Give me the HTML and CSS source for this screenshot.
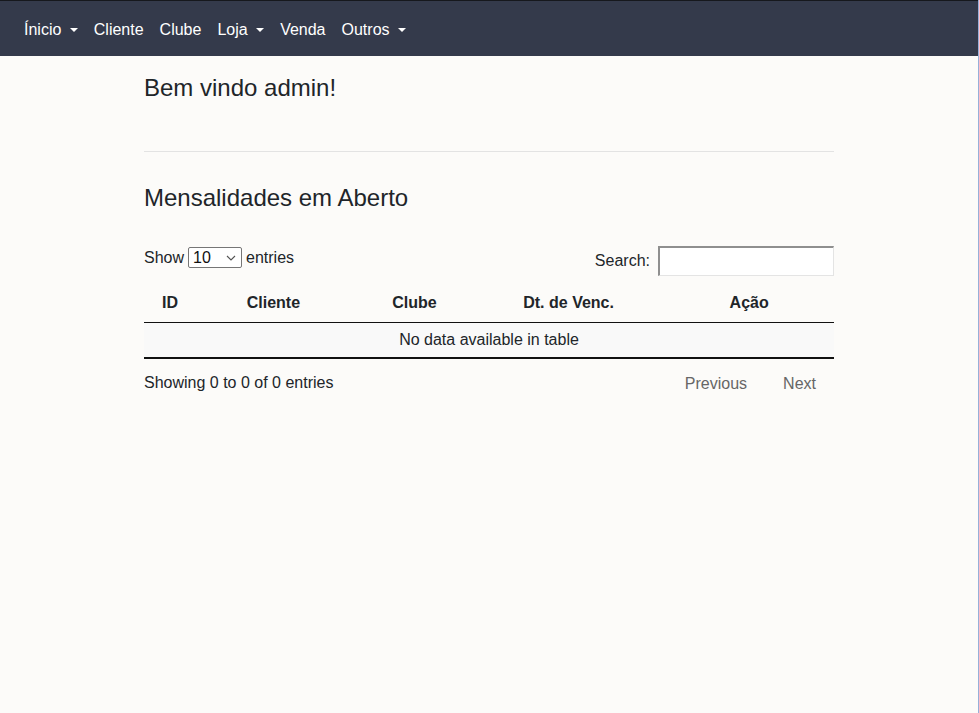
FILE: index.html
```html
<!DOCTYPE html>
<html lang="pt">
<head>
<meta charset="utf-8">
<title>Início</title>
<link rel="stylesheet" href="styles.css">
</head>
<body>
<nav class="navbar">
  <ul class="nav-list">
    <li><a class="nav-link dropdown" href="#">Ínicio </a></li>
    <li><a class="nav-link" href="#">Cliente</a></li>
    <li><a class="nav-link" href="#">Clube</a></li>
    <li><a class="nav-link dropdown" href="#">Loja </a></li>
    <li><a class="nav-link" href="#">Venda</a></li>
    <li><a class="nav-link dropdown" href="#">Outros </a></li>
  </ul>
</nav>
<main class="container">
  <h4 class="title">Bem vindo admin!</h4>
  <hr class="divider">
  <h4 class="title second">Mensalidades em Aberto</h4>
  <div class="dt-wrapper">
    <div class="dt-top">
      <label class="dt-length">Show <select class="dt-select"><option>10</option><option>25</option><option>50</option><option>100</option></select> entries</label>
      <label class="dt-filter">Search:<input class="dt-search" type="search"></label>
    </div>
    <table class="dt-table">
      <thead>
        <tr><th>ID</th><th>Cliente</th><th>Clube</th><th>Dt. de Venc.</th><th>Ação</th></tr>
      </thead>
      <tbody>
        <tr><td class="empty" colspan="5">No data available in table</td></tr>
      </tbody>
    </table>
    <div class="dt-bottom">
      <div class="dt-info">Showing 0 to 0 of 0 entries</div>
      <div class="dt-paginate">
        <a class="page-btn prev" href="#">Previous</a>
        <a class="page-btn" href="#">Next</a>
      </div>
    </div>
  </div>
</main>
</body>
</html>
```
FILE: styles.css
```css
* { box-sizing: border-box; }
html { background: #fcfbf9; }
body {
  margin: 0;
  min-height: 100vh;
  background: #fcfbf9;
  border-right: 1px solid #97afd9;
  font-family: "Liberation Sans", Arial, sans-serif;
  font-size: 16px;
  line-height: 1.5;
  color: #212529;
}
.navbar {
  height: 56px;
  background: #343a4b;
  border-top: 1px solid #16181d;
  display: flex;
  align-items: center;
  padding: 2px 16px 0;
}
.nav-list {
  list-style: none;
  margin: 0;
  padding: 0;
  display: flex;
}
.nav-link {
  display: block;
  padding: 8px;
  color: #fff;
  text-decoration: none;
  white-space: pre;
}
.dropdown::after {
  content: "";
  display: inline-block;
  margin-left: 4px;
  vertical-align: 3px;
  border-top: 4px solid #fff;
  border-left: 4px solid transparent;
  border-right: 4px solid transparent;
}
.container {
  width: 720px;
  margin: 0 auto;
  padding: 18px 15px 0;
}
.title {
  margin: 0;
  font-size: 24px;
  font-weight: 400;
  line-height: 1.2;
}
.divider {
  margin: 48px 0 0;
  border: 0;
  border-top: 1px solid #e3e3e3;
}
.second { margin-top: 32px; }
.dt-wrapper { margin-top: 34px; }
.dt-top {
  display: flex;
  justify-content: space-between;
  align-items: flex-start;
}
.dt-length { display: flex; align-items: center; gap: 4px; height: 22px; }
.dt-select {
  -webkit-appearance: none;
  appearance: none;
  width: 54px;
  height: 21px;
  font-family: inherit;
  font-size: 16px;
  line-height: 19px;
  border: 1px solid #767676;
  border-radius: 2px;
  color: #111;
  padding: 0 0 0 4px;
  background: #fff url("data:image/svg+xml,%3Csvg xmlns='http://www.w3.org/2000/svg' width='10' height='6' viewBox='0 0 10 6'%3E%3Cpath d='M1 1l4 4 4-4' fill='none' stroke='%23555' stroke-width='1.1'/%3E%3C/svg%3E") no-repeat right 5px center;
}
.dt-filter { display: flex; align-items: center; margin-top: -1px; }
.dt-search {
  margin-left: 8px;
  width: 176px;
  height: 30px;
  border-style: solid;
  border-width: 2px 1px 1px 2px;
  border-color: #8f8f8f #e4e4e4 #e4e4e4 #8f8f8f;
  background: #fff;
  padding: 2px 4px;
  font-family: inherit;
  font-size: 16px;
}
.dt-table {
  width: 100%;
  border-collapse: collapse;
  margin-top: 8px;
  line-height: 18px;
  border-bottom: 2px solid #111;
}
.dt-table th {
  text-align: left;
  font-weight: 700;
  padding: 10px 18px;
  border-bottom: 1px solid #111;
}
.dt-table td {
  padding: 8px 10px;
}
.dt-table td.empty {
  text-align: center;
  background: #f9f9f9;
}
.dt-bottom {
  display: flex;
  justify-content: space-between;
  align-items: flex-start;
}
.dt-info { padding-top: 12px; }
.dt-paginate { display: flex; padding-top: 7px; }
.page-btn {
  padding: 8px 17px;
  margin-left: 1px;
  color: #666;
  text-decoration: none;
  line-height: 18px;
  border: 1px solid transparent;
}
.page-btn.prev { padding-left: 16px; padding-right: 16px; }
```
